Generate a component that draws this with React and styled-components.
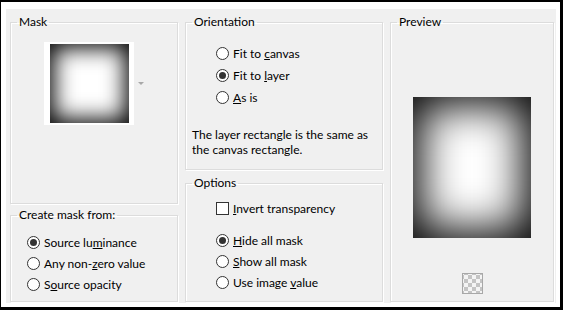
import React from "react";
import styled, { createGlobalStyle } from "styled-components";

const GlobalStyle = createGlobalStyle`
  html, body { margin: 0; padding: 0; background: #fff; }
  body {
    font-family: Lato, "Liberation Sans", sans-serif;
    font-size: 12px;
    color: #000;
  }
  * { box-sizing: border-box; }
`;

const Frame = styled.div`
  width: 563px;
  height: 310px;
  border-style: solid;
  border-color: #000;
  border-width: 2px 3px 3px 1px;
  background: #fff;
  padding: 7px 4px 4px 5px;
`;

const Panel = styled.div`
  height: 100%;
  background: #f0f0f0;
  display: flex;
  gap: 7px;
  padding: 6px 2px 1px 4px;
`;

const Column = styled.div`
  display: flex;
  flex-direction: column;
  gap: ${(p) => p.$gap || 0}px;
  width: ${(p) => (p.$width ? `${p.$width}px` : "auto")};
  flex: ${(p) => (p.$width ? "none" : "1")};
`;

const Group = styled.fieldset`
  margin: 0;
  min-width: 0;
  border: 1px solid #dcdcdc;
  box-shadow: inset 1px 1px 0 #fff, 1px 1px 0 #fff;
  padding: 0;
  height: ${(p) => (p.$height ? `${p.$height}px` : "auto")};
  flex: ${(p) => (p.$height ? "none" : "1")};
`;

const Title = styled.legend`
  margin-left: 6px;
  padding: 0 2px;
  line-height: 14px;
  font-size: 12px;
`;

const Body = styled.div`
  display: flex;
  flex-direction: column;
  align-items: ${(p) => p.$align || "stretch"};
  padding: ${(p) => p.$pad || "0"};
`;

const ThumbRow = styled.div`
  display: flex;
  align-items: center;
  justify-content: center;
  gap: 4px;
`;

const ThumbFrame = styled.div`
  background: #fff;
  padding: 2px 5px 2px 6px;
`;

const FadeImage = styled.div`
  width: ${(p) => p.$w}px;
  height: ${(p) => p.$h}px;
  background: #fff;
  box-shadow: inset 0 0 ${(p) => p.$blur}px ${(p) => p.$spread}px #000;
`;

const DropArrow = styled.span`
  width: 0;
  height: 0;
  border-left: 3px solid transparent;
  border-right: 3px solid transparent;
  border-top: 3px solid #a8a8a8;
`;

const OptionList = styled.div`
  display: flex;
  flex-direction: column;
  margin-left: ${(p) => p.$indent || 0}px;
  margin-top: ${(p) => p.$top || 0}px;
`;

const Row = styled.label`
  display: flex;
  align-items: center;
  gap: 4px;
  height: ${(p) => p.$h || 22}px;
  white-space: nowrap;
`;

const RadioCircle = styled.span`
  width: 13px;
  height: 13px;
  border-radius: 50%;
  border: 1px solid #333;
  background: #fff;
  display: flex;
  align-items: center;
  justify-content: center;
  flex: none;
  &::after {
    content: "";
    width: 7px;
    height: 7px;
    border-radius: 50%;
    background: ${(p) => (p.$on ? "#333" : "transparent")};
  }
`;

const CheckSquare = styled.span`
  width: 13px;
  height: 13px;
  border: 1px solid #333;
  background: #fff;
  flex: none;
`;

const Note = styled.p`
  margin: 19px 0 0;
  line-height: 15px;
`;

const Checker = styled.div`
  width: 21px;
  height: 21px;
  margin-top: 35px;
  border: 1px solid #a8a8a8;
  background: repeating-conic-gradient(#c4c4c4 0 25%, #f4f4f4 0 50%) 1px 1px / 8px 8px;
`;

const Mn = ({ text, at }) => {
  const i = text.indexOf(at);
  return (
    <span>
      {text.slice(0, i)}
      <u>{text.slice(i, i + 1)}</u>
      {text.slice(i + 1)}
    </span>
  );
};

const Radio = ({ on, text, at, h }) => (
  <Row $h={h}>
    <RadioCircle $on={on} />
    <Mn text={text} at={at} />
  </Row>
);

export default function App() {
  return (
    <>
      <GlobalStyle />
      <Frame>
        <Panel>
          <Column $width={168} $gap={4}>
            <Group $height={189}>
              <Title>Mask</Title>
              <Body $pad="13px 0 0 0">
                <ThumbRow>
                  <ThumbFrame>
                    <FadeImage $w={79} $h={79} $blur={22} $spread={4} />
                  </ThumbFrame>
                  <DropArrow />
                </ThumbRow>
              </Body>
            </Group>
            <Group>
              <Title>Create mask from:</Title>
              <Body $pad="10px 0 0 16px">
                <Radio on h={21} text="Source luminance" at="m" />
                <Radio h={21} text="Any non-zero value" at="z" />
                <Radio h={21} text="Source opacity" at="o" />
              </Body>
            </Group>
          </Column>
          <Column $width={198} $gap={6}>
            <Group $height={155}>
              <Title>Orientation</Title>
              <Body $pad="13px 0 0 6px">
                <OptionList $indent={24}>
                  <Radio text="Fit to canvas" at="c" />
                  <Radio on text="Fit to layer" at="l" />
                  <Radio text="As is" at="A" />
                </OptionList>
                <Note>
                  The layer rectangle is the same as
                  <br />
                  the canvas rectangle.
                </Note>
              </Body>
            </Group>
            <Group>
              <Title>Options</Title>
              <Body $pad="7px 0 0 30px">
                <Row>
                  <CheckSquare />
                  <Mn text="Invert transparency" at="I" />
                </Row>
                <OptionList $top={11}>
                  <Radio on h={21} text="Hide all mask" at="H" />
                  <Radio h={21} text="Show all mask" at="S" />
                  <Radio h={21} text="Use image value" at="v" />
                </OptionList>
              </Body>
            </Group>
          </Column>
          <Column>
            <Group>
              <Title>Preview</Title>
              <Body $pad="68px 0 0 0" $align="center">
                <FadeImage $w={118} $h={141} $blur={44} $spread={8} />
                <Checker />
              </Body>
            </Group>
          </Column>
        </Panel>
      </Frame>
    </>
  );
}
